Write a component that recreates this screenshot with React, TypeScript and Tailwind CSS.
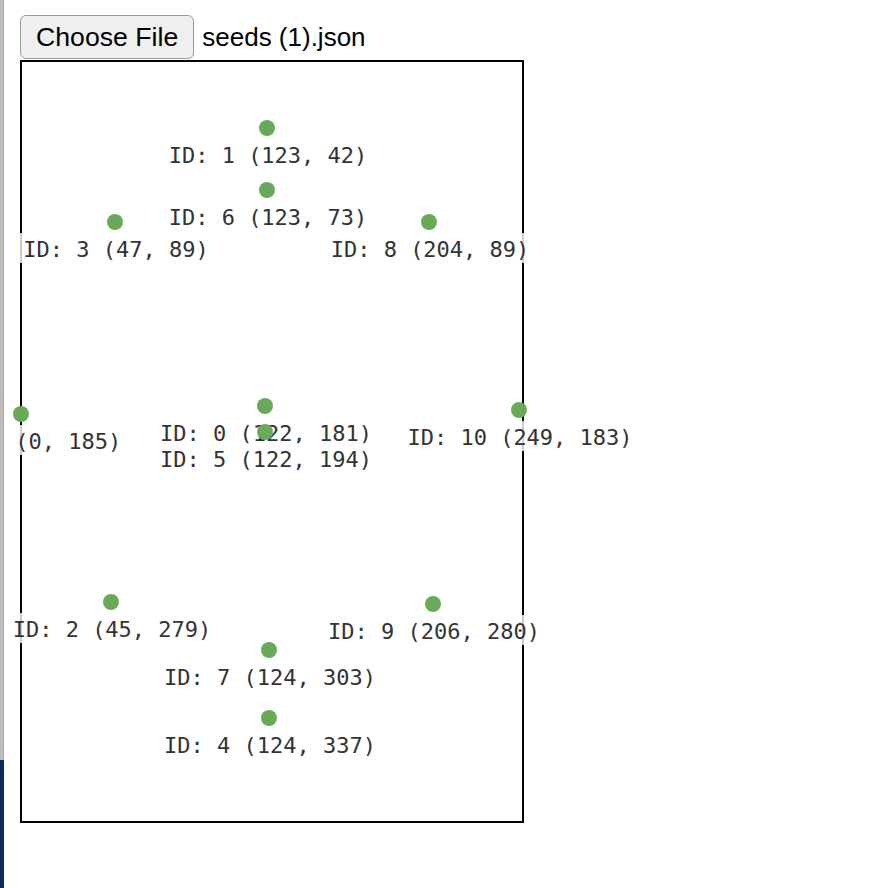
import React from "react";

const points = [
  { id: 1, x: 123, y: 42 },
  { id: 6, x: 123, y: 73 },
  { id: 3, x: 47, y: 89 },
  { id: 8, x: 204, y: 89 },
  { id: 11, x: 0, y: 185 },
  { id: 0, x: 122, y: 181 },
  { id: 5, x: 122, y: 194 },
  { id: 10, x: 249, y: 183 },
  { id: 2, x: 45, y: 279 },
  { id: 9, x: 206, y: 280 },
  { id: 7, x: 124, y: 303 },
  { id: 4, x: 124, y: 337 },
];

export default function App() {
  return (
    <div className="flex w-[884px] h-[888px] bg-white overflow-hidden">
      <div className="relative z-10 flex flex-col w-[4px] h-[888px] shrink-0">
        <div className="h-[760px] bg-[#bdbdbd] border-r border-[#adadad]" />
        <div className="flex-1 bg-[#0f2b5b]" />
      </div>
      <div className="pl-[16px] pt-[15px]">
        <div className="flex items-start gap-[8px] h-[45px]">
          <button
            className="h-[44px] px-[15px] bg-[#efefef] border border-[#9a9a9a] rounded-[6px] text-[26.67px] leading-none text-black"
            style={{ fontFamily: '"Liberation Sans", Arial, sans-serif' }}
          >
            Choose File
          </button>
          <span
            className="h-[44px] flex items-center text-[26px] text-black"
            style={{ fontFamily: '"Liberation Sans", Arial, sans-serif' }}
          >
            seeds (1).json
          </span>
        </div>
        <div className="relative w-[504px] h-[763px] border-2 border-black">
          {points.map((p) => (
            <div
              key={"l" + p.id}
              className="absolute -translate-x-1/2 h-[30px] pt-[3px] px-[4px] leading-[28px] whitespace-nowrap bg-white/80 text-[22px] text-[#333]"
              style={{
                left: 2 * p.x,
                top: 2 * p.y - 7,
                fontFamily: '"DejaVu Sans Mono", monospace',
              }}
            >
              {`ID: ${p.id} (${p.x}, ${p.y})`}
            </div>
          ))}
          {points.map((p) => (
            <div
              key={"d" + p.id}
              className="absolute w-[16px] h-[16px] rounded-full bg-[#68aa5a]"
              style={{ left: 2 * p.x - 9, top: 2 * p.y - 26 }}
            />
          ))}
        </div>
      </div>
    </div>
  );
}
